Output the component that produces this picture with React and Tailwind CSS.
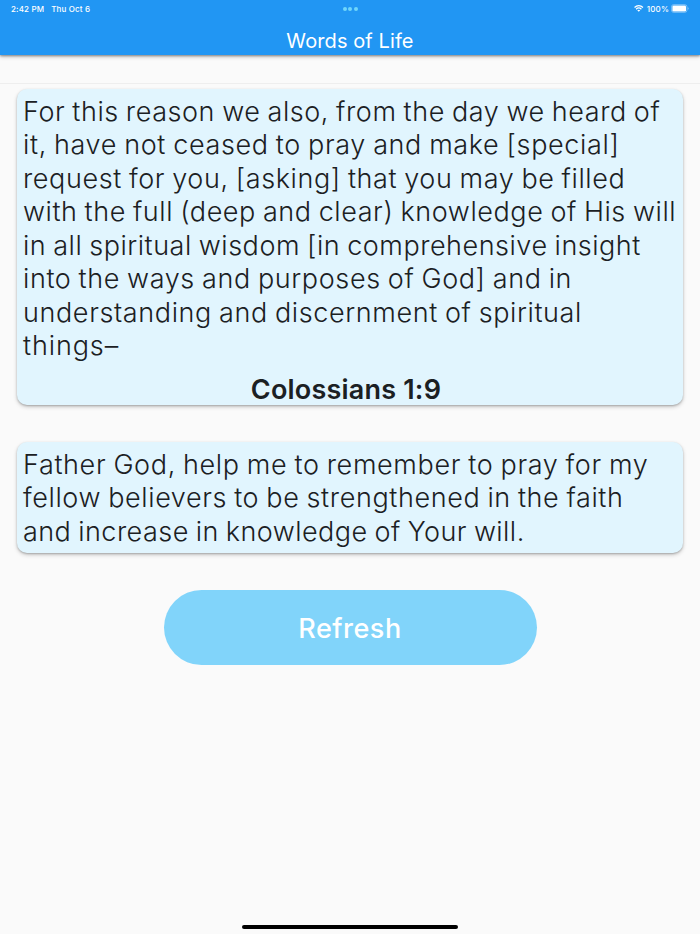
import { useState } from "react";

const verse = {
  lines: [
    { text: "For this reason we also, from the day we heard of", spacing: "tracking-[0.57px]" },
    { text: "it, have not ceased to pray and make [special]", spacing: "tracking-[0.64px]" },
    { text: "request for you, [asking] that you may be filled", spacing: "tracking-[0.6px]" },
    { text: "with the full (deep and clear) knowledge of His will", spacing: "tracking-[0.57px]" },
    { text: "in all spiritual wisdom [in comprehensive insight", spacing: "tracking-[0.52px]" },
    { text: "into the ways and purposes of God] and in", spacing: "tracking-[0.61px]" },
    { text: "understanding and discernment of spiritual", spacing: "tracking-[0.61px]" },
    { text: "things–", spacing: "tracking-[0.88px]" },
  ],
  reference: "Colossians 1:9",
};

const prayer = [
  { text: "Father God, help me to remember to pray for my", spacing: "tracking-[0.64px]" },
  { text: "fellow believers to be strengthened in the faith", spacing: "tracking-[0.61px]" },
  { text: "and increase in knowledge of Your will.", spacing: "tracking-[0.45px]" },
];

const Lines = ({ lines }) => (
  <p className="text-[27px] leading-[33.5px] font-light whitespace-nowrap [word-spacing:-1.1px]">
    {lines.map((line) => (
      <span key={line.text} className={`block ${line.spacing}`}>
        {line.text}
      </span>
    ))}
  </p>
);

const Card = ({ className, children }) => (
  <section
    className={`rounded-[10px] bg-[#e1f5fe] px-[6px] text-[#1b2023] shadow-[0_1px_2px_rgba(0,0,0,0.22),0_2px_4px_rgba(0,0,0,0.18)] ${className}`}
  >
    {children}
  </section>
);

const WifiIcon = () => (
  <svg viewBox="0 0 18 13" className="h-[7px] w-[9.5px]" fill="none" stroke="currentColor" strokeWidth="2.4">
    <path d="M1 4.6C5.6 0.2 12.4 0.2 17 4.6" />
    <path d="M4 7.8C6.8 5.1 11.2 5.1 14 7.8" />
    <path d="M9 12.8L6.2 10C7.8 8.6 10.2 8.6 11.8 10Z" fill="currentColor" stroke="none" />
  </svg>
);

const BatteryIcon = () => (
  <svg viewBox="0 0 18 9" className="h-[9px] w-[18px]">
    <rect x="0.4" y="0.6" width="15.6" height="7.8" rx="2.3" fill="none" stroke="white" strokeOpacity="0.45" strokeWidth="0.8" />
    <rect x="1.4" y="1.6" width="13.6" height="5.8" rx="1.2" fill="white" />
    <path d="M16.8 3.2C17.9 3.6 17.9 5.4 16.8 5.8Z" fill="white" fillOpacity="0.5" />
  </svg>
);

const StatusBar = () => (
  <div className="grid h-[17px] grid-cols-3 items-center pr-[11px] pl-[11px] text-[8px] leading-none font-medium">
    <div className="flex gap-[7px] tracking-[0.15px]">
      <span>2:42 PM</span>
      <span>Thu Oct 6</span>
    </div>
    <div className="flex justify-center gap-[1.5px] text-[#6fd6fb]">
      <span className="size-[4px] rounded-full bg-current" />
      <span className="size-[4px] rounded-full bg-current" />
      <span className="size-[4px] rounded-full bg-current" />
    </div>
    <div className="flex items-center justify-end">
      <WifiIcon />
      <span className="mr-[2px] ml-[3px] tracking-[0.15px]">100%</span>
      <BatteryIcon />
    </div>
  </div>
);

const App = () => {
  const [count, setCount] = useState(0);

  return (
    <div className="flex h-[934px] w-[700px] flex-col bg-[#fafafa] font-['Inter',sans-serif]">
      <header className="z-10 h-[55px] bg-[#2196f3] text-white shadow-[0_1px_2px_rgba(0,0,0,0.35),0_2px_4px_rgba(0,0,0,0.2)]">
        <StatusBar />
        <h1 className="pt-[9px] text-center text-[20px] tracking-[0.1px]">Words of Life</h1>
      </header>
      <div className="h-[29px] border-b border-[#eeeeee]" />
      <main className="flex flex-1 flex-col px-[17px] pt-[5px]">
        <Card className="h-[316px] pt-[5.7px]">
          <Lines lines={verse.lines} />
          <h2 className="pt-[7.3px] pr-[8px] text-center text-[27px] leading-[39px] font-semibold tracking-[0.2px]">
            {verse.reference}
          </h2>
        </Card>
        <Card className="mt-[37px] h-[111px] pt-[5.7px]">
          <Lines lines={prayer} />
        </Card>
        <button
          onClick={() => setCount(count + 1)}
          className="mt-[37px] h-[75px] w-[373px] self-center rounded-full bg-[#81d4fa] pt-[3px] text-[27px] font-medium tracking-[0.5px] text-white"
        >
          Refresh
        </button>
      </main>
      <footer className="flex justify-center pb-[5.5px]">
        <div className="h-[4px] w-[216px] rounded-full bg-black" />
      </footer>
    </div>
  );
};

export default App;
